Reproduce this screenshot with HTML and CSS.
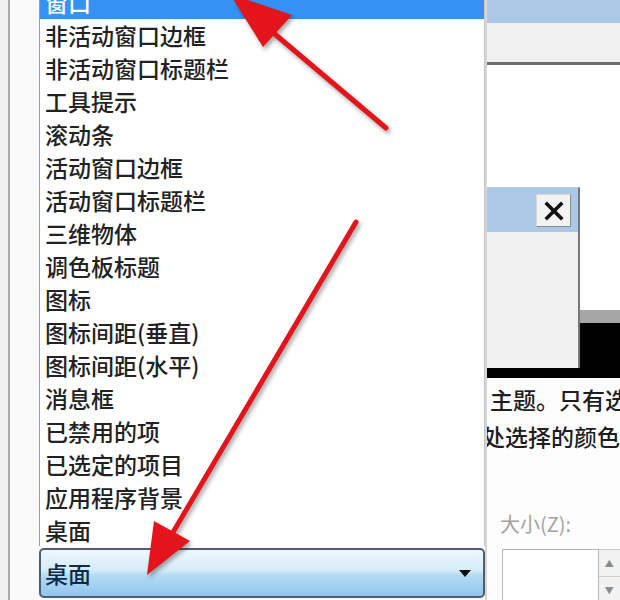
FILE: index.html
```html
<!DOCTYPE html>
<html lang="zh-CN">
<head>
    <meta charset="UTF-8">
    <title>窗口颜色和外观</title>
    <link rel="stylesheet" href="styles.css">
</head>
<body>
    <div class="frame">
        <div class="dialog">
            <div class="left">
                <div class="list">
                    <ul class="items">
                        <li class="selected">窗口</li>
                        <li>非活动窗口边框</li>
                        <li>非活动窗口标题栏</li>
                        <li>工具提示</li>
                        <li>滚动条</li>
                        <li>活动窗口边框</li>
                        <li>活动窗口标题栏</li>
                        <li>三维物体</li>
                        <li>调色板标题</li>
                        <li>图标</li>
                        <li>图标间距(垂直)</li>
                        <li>图标间距(水平)</li>
                        <li>消息框</li>
                        <li>已禁用的项</li>
                        <li>已选定的项目</li>
                        <li>应用程序背景</li>
                        <li>桌面</li>
                    </ul>
                </div>
                <div class="combo">
                    <span class="combo-text">桌面</span>
                    <span class="combo-arrow"></span>
                </div>
            </div>

            <div class="right">
                <div class="preview">
                    <div class="title-band"></div>
                    <div class="menu-band"></div>
                    <div class="workspace">
                        <div class="ws-top"></div>
                        <div class="ws-row">
                            <div class="msgbox">
                                <div class="msg-title">
                                    <span class="close-btn">
                                        <svg width="20" height="20" viewBox="0 0 20 20">
                                            <path d="M3 3 L17 17 M17 3 L3 17" stroke="#111" stroke-width="3.6" stroke-linecap="square"/>
                                        </svg>
                                    </span>
                                </div>
                                <div class="msg-body"></div>
                            </div>
                            <div class="ws-side">
                                <div class="side-white"></div>
                                <div class="side-gray"></div>
                                <div class="side-black"></div>
                            </div>
                        </div>
                        <div class="ws-bottom"></div>
                    </div>
                </div>

                <div class="info">
                    <div class="desc">主题。只有选</div>
                    <div class="desc desc-wrap">处选择的颜色</div>
                    <div class="size-label">大小(Z):</div>
                    <div class="size-field">
                        <div class="size-input"></div>
                        <div class="spinner">
                            <span class="spin-up">&#9650;</span>
                            <span class="spin-down">&#9660;</span>
                        </div>
                    </div>
                </div>
            </div>
        </div>
    </div>

    <svg class="arrows" width="620" height="600" viewBox="0 0 620 600">
        <line x1="386" y1="128" x2="270" y2="30" stroke="#e3141b" stroke-width="5" stroke-linecap="round"/>
        <polygon points="230,-6 292,15 263,47" fill="#e3141b"/>
        <line x1="356" y1="222" x2="172" y2="534" stroke="#e3141b" stroke-width="5" stroke-linecap="round"/>
        <polygon points="147,575 154,521 190,541" fill="#e3141b"/>
    </svg>
</body>
</html>
```

FILE: styles.css
```css
body {
    margin: 0;
    width: 620px;
    height: 600px;
    overflow: hidden;
    background-color: #f0f0f0;
    font-family: "Noto Sans CJK SC", "Microsoft YaHei", sans-serif;
    position: relative;
}
.frame {
    padding-left: 8px;
    height: 600px;
}
.dialog {
    display: flex;
    height: 600px;
    border-left: 2px solid #a9a9a9;
    background-color: #fafafa;
    padding-left: 29px;
}
.left {
    width: 446px;
    display: flex;
    flex-direction: column;
}
.list {
    height: 546px;
    background-color: #fff;
    border-left: 1px solid #9c9c9c;
    border-right: 1px solid #c4c4c4;
    overflow: hidden;
}
.items {
    list-style: none;
    margin: -14px 0 0 0;
    padding: 0;
}
.items li {
    height: 33px;
    line-height: 33px;
    padding-left: 5px;
    font-size: 23px;
    font-weight: 500;
    color: #222;
    white-space: nowrap;
}
.items li.selected {
    background-color: #3592f2;
    color: #fff;
}
.combo {
    margin-top: 2px;
    height: 46px;
    border: 2px solid #4f5e6c;
    border-radius: 5px;
    background: linear-gradient(to bottom, #eef8fe 0%, #d3ecfa 45%, #b3dbf4 55%, #92c6ec 100%);
    display: flex;
    align-items: center;
    justify-content: space-between;
    padding: 0 12px 0 4px;
}
.combo-text {
    font-size: 23px;
    font-weight: 500;
    color: #112a46;
}
.combo-arrow {
    width: 0;
    height: 0;
    border-left: 6px solid transparent;
    border-right: 6px solid transparent;
    border-top: 7px solid #111;
}
.right {
    flex: 1;
    border-left: 2px solid #d6d6d6;
    background-color: #fdfdfd;
    overflow: hidden;
}
.title-band {
    height: 23px;
    background-color: #abc9e7;
}
.menu-band {
    height: 39px;
    background-color: #f0f0f0;
    border-bottom: 3px solid #6f6f6f;
}
.workspace {
    display: flex;
    flex-direction: column;
    background-color: #fff;
}
.ws-top {
    height: 122px;
}
.ws-row {
    display: flex;
    height: 181px;
}
.msgbox {
    width: 91px;
    border-top: 1px solid #c9c9c9;
    border-right: 2px solid #777;
    display: flex;
    flex-direction: column;
}
.msg-title {
    height: 44px;
    background-color: #abc9e7;
    display: flex;
    justify-content: flex-end;
    align-items: flex-start;
}
.close-btn {
    margin: 6px 7px 0 0;
    width: 33px;
    height: 31px;
    background-color: #f3f3f3;
    border: 1px solid #d8d8d8;
    border-right-color: #8a8a8a;
    border-bottom-color: #8a8a8a;
    display: flex;
    align-items: center;
    justify-content: center;
}
.msg-body {
    flex: 1;
    background-color: #f0f0f0;
}
.ws-side {
    flex: 1;
    display: flex;
    flex-direction: column;
}
.side-white {
    height: 123px;
}
.side-gray {
    height: 13px;
    background-color: #a6a6a6;
}
.side-black {
    flex: 1;
    background-color: #000;
}
.ws-bottom {
    height: 10px;
    background-color: #000;
}
.info {
    padding: 3px 0 0 3px;
}
.desc {
    font-size: 23px;
    font-weight: 500;
    line-height: 37px;
    color: #1e1e1e;
    white-space: nowrap;
}
.desc-wrap {
    margin-left: -8px;
}
.size-label {
    margin: 55px 0 0 10px;
    font-size: 20px;
    line-height: 28px;
    color: #a2a2a2;
}
.size-field {
    margin: 11px 0 0 12px;
    display: flex;
    height: 60px;
}
.size-input {
    width: 98px;
    border: 1px solid #b5b5b5;
    background-color: #fff;
}
.spinner {
    width: 22px;
    display: flex;
    flex-direction: column;
    border-top: 1px solid #c8c8c8;
}
.spinner span {
    height: 26px;
    display: flex;
    align-items: center;
    justify-content: center;
    font-size: 9px;
    color: #8a8a8a;
    background-color: #f2f2f2;
    border-bottom: 1px solid #d0d0d0;
}
.arrows {
    position: absolute;
    top: 0;
    left: 0;
    pointer-events: none;
    filter: drop-shadow(2px 3px 2px rgba(0,0,0,0.35));
}
```
